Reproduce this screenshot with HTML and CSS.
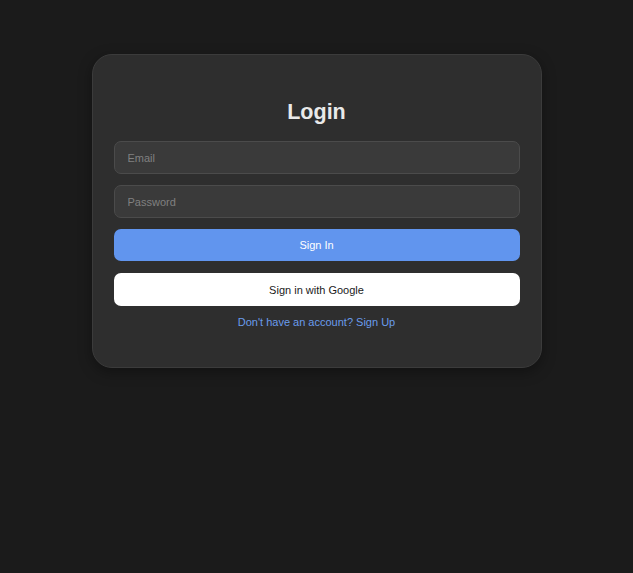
FILE: index.html
```html
<!DOCTYPE html>
<html lang="en">
<head>
<meta charset="utf-8">
<title>Login</title>
<link rel="stylesheet" href="styles.css">
</head>
<body>
  <main class="card">
    <h2 class="title">Login</h2>
    <form class="form">
      <input class="field" type="email" placeholder="Email">
      <input class="field" type="password" placeholder="Password">
      <button class="btn btn-primary" type="button">Sign In</button>
      <button class="btn btn-google" type="button">Sign in with Google</button>
    </form>
    <a class="link" href="#">Don't have an account? Sign Up</a>
  </main>
</body>
</html>
```

FILE: styles.css
```css
html, body {
  margin: 0;
  padding: 0;
  background: #1b1b1b;
  font-family: "Liberation Sans", Arial, sans-serif;
}
body {
  padding-top: 54px;
  min-height: 573px;
  box-sizing: border-box;
}
.card {
  width: 450px;
  box-sizing: border-box;
  margin: 0 auto;
  background: #2e2e2e;
  border: 1px solid #3b3b3b;
  border-radius: 20px;
  padding: 45px 21px 39px;
  display: flex;
  flex-direction: column;
  align-items: stretch;
  box-shadow: 0 4px 14px rgba(0,0,0,0.35);
}
.title {
  margin: 0 0 17px;
  text-align: center;
  color: #e9e9e9;
  font-size: 21.5px;
  font-weight: bold;
  line-height: 24px;
}
.form {
  display: flex;
  flex-direction: column;
  margin: 0;
}
.field {
  height: 33px;
  box-sizing: border-box;
  margin: 0 0 11px;
  padding: 0 13px;
  background: #3a3a3a;
  border: 1px solid #4b4b4b;
  border-radius: 7px;
  color: #e0e0e0;
  font-family: inherit;
  font-size: 11px;
  outline: none;
}
.field::placeholder {
  color: #808080;
}
.btn {
  box-sizing: border-box;
  border: none;
  border-radius: 7px;
  font-family: inherit;
  font-size: 11px;
  cursor: pointer;
  padding: 0;
}
.btn-primary {
  height: 32px;
  background: #6195ee;
  color: #ffffff;
  margin: 0 0 12px;
}
.btn-google {
  height: 33px;
  background: #ffffff;
  color: #1a1a1a;
  margin: 0 0 10px;
}
.link {
  text-align: center;
  color: #6a9cec;
  font-size: 11px;
  line-height: 12px;
  text-decoration: none;
}
```
